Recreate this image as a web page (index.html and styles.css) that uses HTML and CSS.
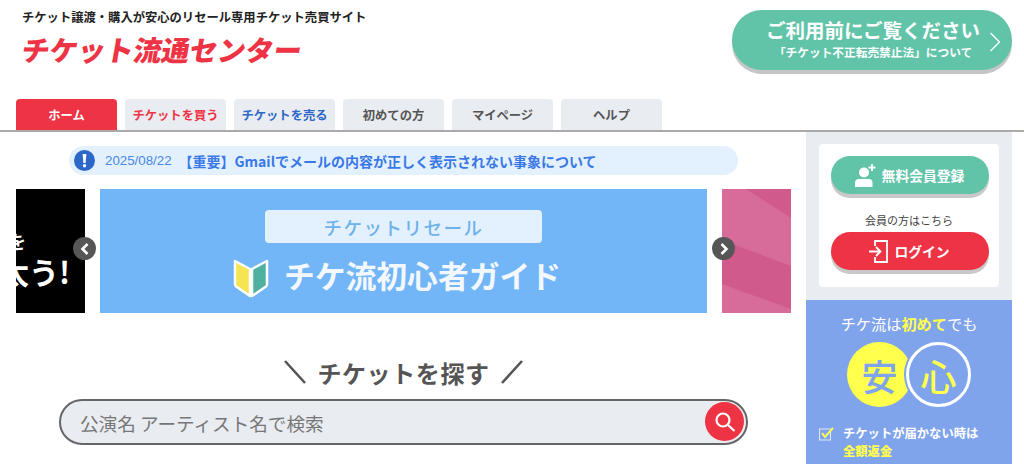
FILE: index.html
```html
<!DOCTYPE html>
<html lang="ja">
<head>
  <meta charset="UTF-8">
  <meta name="viewport" content="width=device-width, initial-scale=1.0">
  <title>チケット流通センター</title>
  <link rel="stylesheet" href="styles.css">
</head>
<body>
  <!-- ヘッダー -->
  <header class="header">
    <div class="brand">
      <p class="tagline">チケット譲渡・購入が安心のリセール専用チケット売買サイト</p>
      <div class="logo">チケット流通センター</div>
    </div>
    <a class="notice-btn" href="#">
      <span class="notice-btn-text">
        <span class="notice-btn-title">ご利用前にご覧ください</span>
        <span class="notice-btn-sub">「チケット不正転売禁止法」について</span>
      </span>
      <svg class="notice-btn-arrow" width="12" height="22" viewBox="0 0 12 22"><path d="M1.500 2l9 9-9 9" fill="none" stroke="#fff" stroke-width="1.300"/></svg>
    </a>
  </header>

  <!-- タブ -->
  <nav class="tabs">
    <a class="tab tab-home" href="#">ホーム</a>
    <a class="tab tab-buy" href="#">チケットを買う</a>
    <a class="tab tab-sell" href="#">チケットを売る</a>
    <a class="tab" href="#">初めての方</a>
    <a class="tab" href="#">マイページ</a>
    <a class="tab" href="#">ヘルプ</a>
  </nav>

  <div class="content">
    <main class="main">
      <div class="news">
        <svg class="news-icon" width="21" height="21" viewBox="0 0 21 21">
          <circle cx="10.500" cy="10.500" r="10.500" fill="#2d68c8"/>
          <path d="M8.600 4h3.800l-.8 9H9.400z" fill="#fff"/>
          <circle cx="10.500" cy="15.800" r="1.700" fill="#fff"/>
        </svg>
        <span class="news-date">2025/08/22</span>
        <span class="news-title">【重要】Gmailでメールの内容が正しく表示されない事象について</span>
      </div>

      <div class="carousel">
        <div class="slide slide-black">
          <span class="slide-black-small">を</span>
          <span class="slide-black-big">太う!</span>
        </div>
        <div class="slide slide-guide">
          <div class="guide-label">チケットリセール</div>
          <div class="guide-title">
            <svg width="36" height="41" viewBox="0 0 36 41">
              <path d="M2 4l15 8v27L3 29.500Q2 29 2 27z" fill="#f6e452" stroke="#fff" stroke-width="2.500" stroke-linejoin="round"/>
              <path d="M34 4l-15 8v27l14-9.500q1-.5 1-2.500z" fill="#4fb19f" stroke="#fff" stroke-width="2.500" stroke-linejoin="round"/>
            </svg>
            <span>チケ流初心者ガイド</span>
          </div>
        </div>
        <div class="slide slide-pink">
          <svg width="69" height="124" viewBox="0 0 69 124">
            <path d="M0 0h24l45 29v48L0 51zM0 95l69 25v4H0z" fill="#d76b9a"/>
          </svg>
        </div>
        <button class="carousel-btn carousel-prev">
          <svg width="12" height="14" viewBox="0 0 12 14"><path d="M8.500 2L3.500 7l5 5" fill="none" stroke="#fff" stroke-width="2.600"/></svg>
        </button>
        <button class="carousel-btn carousel-next">
          <svg width="12" height="14" viewBox="0 0 12 14"><path d="M3.500 2l5 5-5 5" fill="none" stroke="#fff" stroke-width="2.600"/></svg>
        </button>
      </div>

      <h2 class="search-title">
        <svg width="22" height="24" viewBox="0 0 22 24"><path d="M1 1l20 22" stroke="#555" stroke-width="2.600"/></svg>
        <span>チケットを探す</span>
        <svg width="22" height="24" viewBox="0 0 22 24"><path d="M21 1L1 23" stroke="#555" stroke-width="2.600"/></svg>
      </h2>

      <form class="search">
        <input class="search-input" type="text" placeholder="公演名 アーティスト名で検索">
        <button class="search-btn" type="button">
          <svg width="24" height="24" viewBox="0 0 24 24">
            <circle cx="10" cy="10" r="6.500" fill="none" stroke="#fff" stroke-width="2.200"/>
            <path d="M15 15l6.500 6" stroke="#fff" stroke-width="2.200"/>
          </svg>
        </button>
      </form>
    </main>

    <aside class="side">
      <div class="member-wrap">
        <div class="member">
          <a class="member-btn member-btn-green" href="#">
            <svg width="21" height="23" viewBox="0 0 21 23">
              <circle cx="9" cy="8.500" r="5" fill="#fff"/>
              <path d="M0 23v-4q0-4 4-4h10q3.500 0 3.500 4v4z" fill="#fff"/>
              <path d="M17 0v7M13.500 3.500h7" stroke="#fff" stroke-width="1.800"/>
            </svg>
            <span>無料会員登録</span>
          </a>
          <p class="member-text">会員の方はこちら</p>
          <a class="member-btn member-btn-red" href="#">
            <svg width="19" height="23" viewBox="0 0 19 23">
              <path d="M6 6V1h12v21H6v-5" fill="none" stroke="#fff" stroke-width="1.800"/>
              <path d="M0 11.500h11M7 7l4.500 4.500L7 16" fill="none" stroke="#fff" stroke-width="1.800"/>
            </svg>
            <span>ログイン</span>
          </a>
        </div>
      </div>
      <div class="safe">
        <p class="safe-title">チケ流は<b>初めて</b>でも</p>
        <div class="safe-circles">
          <span class="safe-circle safe-yellow">安</span>
          <span class="safe-circle safe-ring">心</span>
        </div>
        <div class="safe-item">
          <svg width="16" height="14" viewBox="0 0 16 14">
            <rect x=".5" y="2" width="11" height="11" fill="none" stroke="#dfe7f8" stroke-width="1"/>
            <path d="M3 6l3 4 8-9" fill="none" stroke="#ffff4d" stroke-width="2"/>
          </svg>
          <p>チケットが届かない時は<br><b>全額返金</b></p>
        </div>
      </div>
    </aside>
  </div>
</body>
</html>
```

FILE: styles.css
```css
* {
  box-sizing: border-box;
}

html, body {
  margin: 0;
  padding: 0;
  height: 100%;
  overflow: hidden;
}

body {
  font-family: "Noto Sans CJK JP", "Noto Sans", sans-serif;
  background-color: #fff;
  color: #555;
}

a {
  text-decoration: none;
}

p {
  margin: 0;
}

/* ヘッダー */
.header {
  height: 99px;
  display: flex;
  justify-content: space-between;
  align-items: flex-start;
  padding: 10px 12px 0 22px;
}

.tagline {
  margin-top: -1px;
  font-size: 12.300px;
  font-weight: 700;
  line-height: 16px;
  color: #222;
}

.logo {
  margin: 6px 0 0 -3px;
  font-size: 28px;
  font-weight: 900;
  line-height: 36px;
  color: #ee3344;
  white-space: nowrap;
  transform: skewX(-10deg);
  transform-origin: bottom left;
}

.notice-btn {
  width: 280px;
  height: 60px;
  padding: 0 11px 4px 34px;
  display: flex;
  align-items: center;
  justify-content: space-between;
  background-color: #61c4a9;
  border-radius: 30px;
  box-shadow: 0 4px 0 #c4c6c6;
  color: #fff;
}

.notice-btn-text {
  display: flex;
  flex-direction: column;
  align-items: center;
  font-weight: 700;
}

.notice-btn-title {
  font-size: 19.500px;
  line-height: 28px;
}

.notice-btn-sub {
  font-size: 11.700px;
  line-height: 16px;
  white-space: nowrap;
}

.notice-btn-arrow {
  margin-top: 8px;
}

/* タブ */
.tabs {
  height: 33px;
  display: flex;
  gap: 8px;
  padding-left: 16px;
  border-bottom: 2px solid #aaa;
}

.tab {
  width: 101px;
  height: 31px;
  display: flex;
  align-items: center;
  justify-content: center;
  background-color: #e9ecf1;
  border-radius: 4px 4px 0 0;
  font-size: 12.300px;
  font-weight: 700;
  color: #555;
}

.tab-home {
  background-color: #ee3344;
  color: #fff;
}

.tab-buy {
  color: #ee3344;
}

.tab-sell {
  color: #2d68c8;
}

.content {
  display: flex;
}

.main {
  width: 806px;
  padding: 14px 15px 0 16px;
}

/* お知らせ */
.news {
  width: 669px;
  height: 29px;
  margin-left: 53px;
  padding-left: 5px;
  display: flex;
  align-items: center;
  background-color: #e3f1fe;
  border-radius: 15px;
}

.news-date {
  margin-left: 10px;
  font-family: "Liberation Sans", sans-serif;
  font-size: 13.300px;
  color: #4a86e8;
}

.news-title {
  margin-left: 7px;
  font-size: 14px;
  font-weight: 700;
  color: #3a78e8;
  white-space: nowrap;
}

/* カルーセル */
.carousel {
  position: relative;
  height: 124px;
  margin-top: 14px;
  display: flex;
  justify-content: center;
  gap: 15px;
  overflow: hidden;
}

.slide {
  flex: 0 0 607px;
  height: 124px;
}

.slide-black {
  padding-right: 15px;
  display: flex;
  flex-direction: column;
  justify-content: center;
  align-items: flex-end;
  background-color: #000;
  color: #fff;
  font-weight: 700;
  line-height: 1;
}

.slide-black-small {
  margin: 16px 44px 6px 0;
  font-size: 18px;
}

.slide-black-big {
  font-size: 30px;
}

.slide-guide {
  display: flex;
  flex-direction: column;
  align-items: center;
  padding-top: 21px;
  background-color: #72b6f7;
}

.guide-label {
  width: 277px;
  height: 33px;
  display: flex;
  align-items: center;
  justify-content: center;
  background-color: #e3f1fe;
  border-radius: 4px;
  font-size: 18.500px;
  font-weight: 500;
  letter-spacing: 1.500px;
  color: #6fb1ea;
}

.guide-title {
  margin-top: 10px;
  padding-right: 13px;
  display: flex;
  align-items: center;
  gap: 15px;
  font-size: 30.800px;
  font-weight: 700;
  line-height: 44px;
  color: #f2f8fe;
  white-space: nowrap;
}

.guide-title span {
  margin-bottom: 4px;
}

.slide-pink {
  background-color: #d05a8c;
}

.slide-pink svg {
  display: block;
}

.carousel-btn {
  position: absolute;
  top: 48px;
  width: 23px;
  height: 23px;
  padding: 0;
  display: flex;
  align-items: center;
  justify-content: center;
  background-color: #565656;
  border: none;
  border-radius: 50%;
}

.carousel-prev {
  left: 57px;
}

.carousel-next {
  left: 696px;
}

/* 検索 */
.search-title {
  height: 24px;
  margin: 47px 0 0;
  display: flex;
  align-items: center;
  justify-content: center;
  gap: 11px;
  font-size: 24px;
  font-weight: 700;
  color: #555;
}

.search-title span {
  letter-spacing: .6px;
}

.search {
  position: relative;
  width: 689px;
  height: 46px;
  margin: 15px 0 0 43px;
}

.search-input {
  width: 100%;
  height: 100%;
  padding: 0 50px 0 19px;
  background-color: #e9ecf1;
  border: 2px solid #666;
  border-radius: 23px;
  font-family: inherit;
  font-size: 18.600px;
}

.search-input::placeholder {
  color: #777;
  opacity: 1;
}

.search-btn {
  position: absolute;
  top: 3px;
  right: 4px;
  width: 39px;
  height: 39px;
  padding: 0;
  display: flex;
  align-items: center;
  justify-content: center;
  background-color: #ee3344;
  border: none;
  border-radius: 50%;
}

/* サイドバー */
.side {
  width: 206px;
}

.member-wrap {
  height: 168px;
  padding: 12px 13px;
  background-color: #e9ecf1;
}

.member {
  height: 143px;
  padding-top: 12px;
  display: flex;
  flex-direction: column;
  align-items: center;
  background-color: #fff;
  border-radius: 4px;
}

.member-btn {
  width: 158px;
  height: 38px;
  flex-shrink: 0;
  margin-left: 1px;
  display: flex;
  align-items: center;
  justify-content: center;
  gap: 6px;
  border-radius: 19px;
  box-shadow: 0 4px 0 #c8c8c8;
  font-size: 13.800px;
  font-weight: 700;
  color: #fff;
}

.member-btn-green {
  background-color: #61c4a9;
}

.member-btn-red {
  background-color: #ee3344;
}

.member-text {
  margin: 18px 0 3px;
  font-size: 11px;
  line-height: 17px;
  color: #444;
}

.safe {
  padding: 14px 14px 20px;
  background-color: #7fa4ec;
  color: #fff;
}

.safe-title {
  margin-top: -1px;
  font-size: 15.200px;
  line-height: 20px;
  text-align: center;
  white-space: nowrap;
}

.safe-title b,
.safe-item b {
  color: #ffff4d;
}

.safe-circles {
  margin-top: 9px;
  display: flex;
  justify-content: center;
}

.safe-circle {
  width: 65px;
  height: 65px;
  display: flex;
  align-items: center;
  justify-content: center;
  border-radius: 50%;
  font-size: 36px;
  font-weight: 500;
}

.safe-yellow {
  background-color: #ffff4d;
  color: #7fa4ec;
}

.safe-ring {
  margin-left: -6px;
  background-color: #7fa4ec;
  border: 3px solid #fff;
  box-shadow: 0 0 0 2px #7fa4ec;
  color: #ffff4d;
}

.safe-item {
  margin: 17px 0 0 -1px;
  display: flex;
  gap: 8px;
  font-size: 12.300px;
  font-weight: 700;
  line-height: 18px;
  white-space: nowrap;
}

.safe-item svg {
  flex-shrink: 0;
  margin-top: 3px;
}
```
